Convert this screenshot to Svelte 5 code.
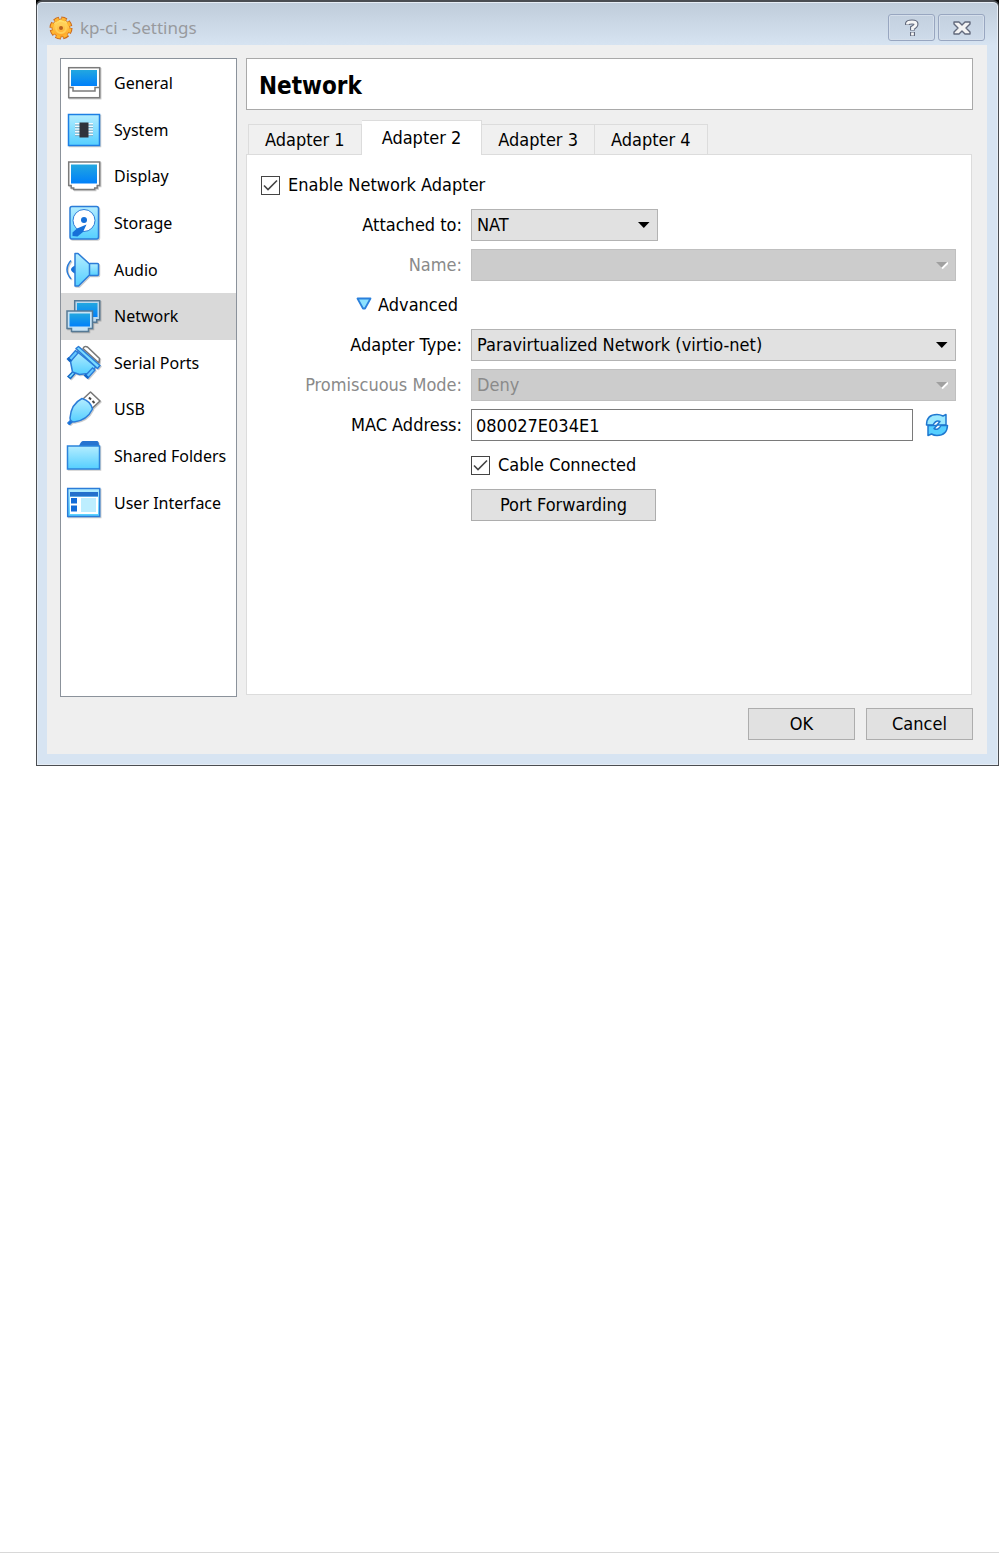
<script>
  const sections = [
    'General', 'System', 'Display', 'Storage', 'Audio',
    'Network', 'Serial Ports', 'USB', 'Shared Folders', 'User Interface'
  ];
  const tabs = ['Adapter 1', 'Adapter 2', 'Adapter 3', 'Adapter 4'];

  let section = $state('Network');
  let tab = $state('Adapter 2');
  let enabled = $state(true);
  let cable = $state(true);
  let mac = $state('080027E034E1');
</script>

{#snippet arrow(disabled)}
  <svg class="arrow" width="12" height="8" viewBox="0 0 12 8" aria-hidden="true">
    {#if disabled}
      <path d="M6 7.500 12 1.500" stroke="#fff" stroke-width="2" />
      <path d="M0 1h11L5.500 6.500z" fill="#a0a0a0" />
    {:else}
      <path d="M0 1h11.500L5.800 7z" fill="#000" />
    {/if}
  </svg>
{/snippet}

{#snippet tick()}
  <svg class="tick" width="19" height="19" viewBox="0 0 19 19" aria-hidden="true">
    <path d="M3 9.500 7 13.500 16 4.500" fill="none" stroke="#444" stroke-width="1.600" />
  </svg>
{/snippet}

{#snippet icon(name)}
  <svg class="icon" width="36" height="36" viewBox="0 0 36 36" fill="none" aria-hidden="true">
    {#if name === 'General'}
      <rect x="2.700" y="2.700" width="31" height="30" fill="#fff" stroke="#7b7b7b" stroke-width="1.500" />
      <rect x="5" y="5" width="26" height="16" fill="url(#screen)" />
      <path d="M3 22.500h4v3.500h22v-3.500h4" stroke="#7b7b7b" stroke-width="1.500" />
    {:else if name === 'System'}
      <rect x="2.500" y="2.500" width="31" height="31" fill="url(#pale)" stroke="#1d7fe4" stroke-width="1.500" />
      <path d="M9 12h18M9 14.700h18M9 17.400h18M9 20.100h18M9 22.800h18" stroke="#f4fbff" stroke-width="2" />
      <path d="M9 12.800h18M9 15.500h18M9 18.200h18M9 20.900h18M9 23.600h18" stroke="#5b91ad" stroke-width=".7" />
      <rect x="13.500" y="10.500" width="9" height="15" fill="#30343c" />
    {:else if name === 'Display'}
      <path d="M2.700 4h31v23.500h-2.500v2.500h-2.500v1.500h-21v-1.500h-2.500v-2.500h-2.500z" fill="#fff" stroke="#7b7b7b" stroke-width="1.500" />
      <rect x="5" y="6.500" width="26" height="19" fill="url(#screen)" />
    {:else if name === 'Storage'}
      <rect x="4" y="1.500" width="28.500" height="32.500" rx="2" fill="url(#pale)" stroke="#2b7cd8" stroke-width="1.500" />
      <circle cx="18" cy="15.500" r="11" fill="#fff" stroke="#2b7cd8" />
      <path d="M20.500 19.500 11 23.500 6.500 27.500v3.500l5 .5 5.500-4.500z" fill="#1670d8" />
      <circle cx="18" cy="15" r="3" fill="#1670d8" />
    {:else if name === 'Audio'}
      <path d="M5 8.500Q-3 17.500 5 27" stroke="#2b7cd8" stroke-width="1.500" />
      <path d="M9 13.500q-8 4 0 8z" fill="#1670d8" />
      <rect x="23" y="11.500" width="9.500" height="12" rx="1" fill="url(#pale)" stroke="#2b7cd8" stroke-width="1.500" />
      <path d="M9 1.500h3L23.500 12v11L12.500 34H9z" fill="url(#pale)" stroke="#2b7cd8" stroke-width="1.500" stroke-linejoin="round" />
    {:else if name === 'Network'}
      <path d="M8.700 2.700h25v19h-3v2.500h-15l-7-4z" fill="#bcd9ee" stroke="#557995" stroke-width="1.500" />
      <rect x="11" y="5" width="20.500" height="14" fill="url(#screen)" />
      <path d="M1 13h25.500v17.500h-4v3h-17v-3H1z" fill="#c6e2f5" stroke="#557995" stroke-width="1.500" />
      <rect x="3.500" y="15.500" width="20.500" height="13" fill="url(#screen)" />
    {:else if name === 'Serial Ports'}
      <path d="M17 3.500Q18.500.5 21.500 2L33.500 13.500 33 18z" fill="#fff" stroke="#777" stroke-width="1.500" stroke-linejoin="round" />
      <path d="m2 31.500 5-5 2 2-4.500 5z" fill="#7bdcff" stroke="#176bc6" stroke-width="1.500" />
      <path d="M11 6.500 4.500 16.500 6.500 27l7 2.500 8.500-1 8-6.500z" fill="url(#pale)" stroke="#2b7cd8" stroke-width="1.500" stroke-linejoin="round" />
      <path d="m2.500 13.500 7-8 2.500 2.500-7 8zM19.500 30.500l7-7.500 2.500 2-7 8z" fill="#66c9ff" stroke="#2b7cd8" stroke-width="1.300" />
      <path d="m.5 14 2-2 3.500 3.500-2.500 1.500zM17.500 30.500l2-1.500 3.500 3-1.500 2z" fill="#1266c8" />
      <path d="M10 3.500 12.500 1.500 34 20.500 31.500 23.500z" fill="#7bdcff" stroke="#2b7cd8" stroke-width="1.500" stroke-linejoin="round" />
    {:else if name === 'USB'}
      <path d="m17 8 7.500-7L34 10l-7.500 7z" fill="#fff" stroke="#777" stroke-width="1.500" stroke-linejoin="round" />
      <path d="m23 6.500 2 2m1.500 1.500 2 2" stroke="#444" stroke-width="2" />
      <path d="m1.500 32 4-4 2 2-4 4z" fill="#1670d8" stroke="#1670d8" />
      <path d="M16 7.500Q5 13 4 27q0 3.500 4 4 13-1.500 18.500-13-2-8-10.500-10.500z" fill="url(#pale)" stroke="#2b7cd8" stroke-width="1.500" stroke-linejoin="round" />
    {:else if name === 'Shared Folders'}
      <path d="M13 8q2-5 4-5h14q2 0 2 5z" fill="#2774d0" />
      <rect x="1.500" y="8" width="32" height="23" fill="url(#pale)" stroke="#2b84dc" stroke-width="1.500" />
    {:else}
      <rect x="1.700" y="3.500" width="32" height="28" fill="url(#pale)" stroke="#2b7cd8" stroke-width="1.500" />
      <path d="M4 7h28v4.500H4z" fill="#2470cc" />
      <path d="M4 12h28v17H4z" fill="#fff" />
      <path d="M5 13h6v5.500H5zm0 7.500h6v6H5z" fill="#126bd8" />
      <path d="M15 13h15v14H15z" fill="#bdeeff" />
    {/if}
  </svg>
{/snippet}

<svg class="defs" width="0" height="0" aria-hidden="true">
  <defs>
    <linearGradient id="screen" x2="0" y2="1"><stop stop-color="#22a7e0" /><stop offset="1" stop-color="#0080fa" /></linearGradient>
    <linearGradient id="pale" x2="0" y2="1"><stop stop-color="#b4edff" /><stop offset="1" stop-color="#55cfff" /></linearGradient>
    <linearGradient id="gear" x2="0" y2="1"><stop stop-color="#ffe873" /><stop offset="1" stop-color="#ff9d1e" /></linearGradient>
  </defs>
</svg>

<div class="page">
  <div class="backdrop">
    <div class="dialog" role="dialog" aria-labelledby="title">
      <header class="titlebar">
        <svg width="24" height="24" viewBox="0 0 24 24" aria-hidden="true">
          <circle cx="12" cy="12" r="9" fill="none" stroke="#c9661c" stroke-width="5" stroke-dasharray="5 2.069" />
          <circle cx="12" cy="12" r="9" fill="url(#gear)" stroke="#d97a20" />
          <circle cx="12" cy="12" r="9" fill="none" stroke="#ffb52f" stroke-width="3" stroke-dasharray="4 3.069" stroke-dashoffset="-.5" />
          <circle cx="12" cy="12" r="5" fill="none" stroke="#ffcf58" stroke-width="2" />
          <circle cx="12" cy="12" r="2" fill="#b9601c" />
        </svg>
        <span id="title" class="title">kp-ci - Settings</span>
        <button class="caption" aria-label="Help">
          <svg width="18" height="18" viewBox="0 0 18 18" fill="none">
            <path d="M4.500 6V4.500Q5 3 9 3t4 2-3.500 4v2.500M9.500 13v4" stroke="#62697c" stroke-width="5" />
            <path d="M4.500 5.500V4.500Q5 3 9 3t4 2-3.500 4v2M9.500 13.500v3" stroke="#f6f6f6" stroke-width="2.800" />
          </svg>
        </button>
        <button class="caption" aria-label="Close">
          <svg width="18" height="18" viewBox="0 0 18 18" fill="none">
            <path d="M1 3h5l3 3 3-3h5v2l-4 4 4 4v2h-5l-3-3-3 3H1v-2l4-4-4-4z" fill="#f3f3f3" stroke="#62697c" stroke-width="1.400" stroke-linejoin="round" />
          </svg>
        </button>
      </header>

      <div class="client">
        <nav class="sidebar" aria-label="Settings sections">
          {#each sections as name}
            <button class="section" class:current={name === section} onclick={() => (section = name)}>
              {@render icon(name)}
              <span>{name}</span>
            </button>
          {/each}
        </nav>

        <main class="content">
          <h1>{section}</h1>
          <div class="tabs" role="tablist">
            {#each tabs as name}
              <button class="tab" role="tab" aria-selected={name === tab} class:active={name === tab} onclick={() => (tab = name)}>{name}</button>
            {/each}
          </div>
          <div class="pane" role="tabpanel">
            <label class="check"><span class="box"><input type="checkbox" bind:checked={enabled} />{#if enabled}{@render tick()}{/if}</span>Enable Network Adapter</label>
            <div class="form">
              <label for="attached">Attached to:</label>
              <div class="combo short"><select id="attached"><option>NAT</option></select>{@render arrow(false)}</div>

              <label class="off" for="name">Name:</label>
              <div class="combo"><select id="name" disabled><option></option></select>{@render arrow(true)}</div>

              <button class="advanced" aria-expanded="true">
                <svg width="16" height="16" viewBox="0 0 16 16" aria-hidden="true"><path d="M1.500 1.500h13L9 11.500H7z" fill="#8ce2ff" stroke="#2b80dc" stroke-width="1.800" stroke-linejoin="round" /></svg>
                Advanced
              </button>

              <label for="type">Adapter Type:</label>
              <div class="combo"><select id="type"><option>Paravirtualized Network (virtio-net)</option></select>{@render arrow(false)}</div>

              <label class="off" for="promiscuous">Promiscuous Mode:</label>
              <div class="combo"><select id="promiscuous" disabled><option>Deny</option></select>{@render arrow(true)}</div>

              <label for="mac">MAC Address:</label>
              <div class="mac">
                <input id="mac" type="text" bind:value={mac} />
                <button class="refresh" aria-label="Generate new address">
                  <svg width="24" height="24" viewBox="0 0 24 24" fill="none" stroke-linejoin="round">
                    <path d="M1.500 12Q1.500 1.500 12 1.500q3 0 6 1.500l3-1.500v10.500h-9l3-3.500q-4-2-7 3.500z" fill="#9be9ff" stroke="#1f78d0" stroke-width="1.500" />
                    <path d="M22.500 12.500Q22 22.500 12 22.500q-3 0-5.500-1.500l-3.500 1.500V12.500h9L9 15.500q4 2.500 7-3z" fill="#55cfff" stroke="#1f78d0" stroke-width="1.500" />
                  </svg>
                </button>
              </div>

              <label class="check second"><span class="box"><input type="checkbox" bind:checked={cable} />{#if cable}{@render tick()}{/if}</span>Cable Connected</label>
              <button class="push forwarding">Port Forwarding</button>
            </div>
          </div>
        </main>

        <footer class="actions">
          <button class="push">OK</button>
          <button class="push">Cancel</button>
        </footer>
      </div>
    </div>
  </div>
</div>

<style>
  :global(body) { background: #fff; }
  * { box-sizing: border-box; }
  button, input, select { font: inherit; color: inherit; margin: 0; border-radius: 0; }
  svg { display: block; flex: none; }
  .defs { position: absolute; }

  .page {
    min-height: 100vh;
    padding-left: 36px;
    border-bottom: 1px solid #d8d8d8;
    color: #000;
    font: 18px/24px "DejaVu Sans Condensed", "Noto Sans", sans-serif;
  }
  .backdrop { background: #000; }
  .dialog {
    padding: 0 11px 11px 10px;
    border: 1px solid #4a4d52;
    border-top-width: 2px;
    border-radius: 6px 6px 0 0;
    background: linear-gradient(#bfccda, #d7e4f2 44px);
    box-shadow: inset 0 0 0 1px #e6edf5;
  }
  .titlebar { display: flex; align-items: center; gap: 3px; height: 43px; padding: 8px 2px 0; }
  .title { flex: 1; padding: 0 0 0 4px; color: #989a9e; font: 17px/24px "Noto Sans", sans-serif; }
  .caption {
    display: grid;
    place-items: center;
    width: 47px;
    height: 27px;
    padding: 0;
    border: 1px solid #98a6c0;
    border-radius: 3px;
    background: linear-gradient(#c3d0df, #cedbea);
    box-shadow: inset 0 0 0 1px #d5dfeb;
  }

  .client {
    display: grid;
    grid-template-columns: 177px minmax(0, 1fr);
    column-gap: 9px;
    row-gap: 11px;
    padding: 13px 14px 14px 13px;
    background: #efefef;
  }
  .sidebar {
    display: grid;
    grid-template-rows: repeat(10, 1fr);
    padding: 1px 0 170px;
    border: 1px solid #8b929b;
    background: #fff;
    font: 16px/24px "Noto Sans", sans-serif;
  }
  .section {
    display: flex;
    align-items: center;
    gap: 12px;
    min-height: 0;
    padding: 0 0 0 5px;
    border: 0;
    background: none;
    text-align: left;
    white-space: nowrap;
  }
  .section.current { background: #d9d9d9; }
  .icon { filter: drop-shadow(1px 1px 0 #0003); }

  .content { display: flex; flex-direction: column; min-width: 0; }
  h1 {
    margin: 0 0 10px;
    padding: 12px 12px 8px;
    border: 1px solid #a9a9a9;
    background: #fff;
    font-size: 24px;
    line-height: 30px;
  }
  .tabs { display: flex; align-items: flex-end; height: 34px; padding-left: 2px; }
  .tab {
    height: 31px;
    padding: 0 16px;
    border: 1px solid #dcdcdc;
    border-left-width: 0;
    background: #f0f0f0;
    margin-bottom: -1px;
  }
  .tab:first-child { border-left-width: 1px; }
  .tab.active { height: 35px; padding: 0 20px; border-bottom: 0; background: #fff; z-index: 1; }
  .pane { flex: 1; min-height: 541px; margin: 0 1px 2px 0; padding: 14px; border: 1px solid #dcdcdc; background: #fff; }

  .check { display: flex; align-items: center; gap: 8px; height: 32px; }
  .pane > .check { margin-bottom: 8px; }
  .box { display: grid; width: 19px; height: 19px; }
  .box input { grid-area: 1 / 1; appearance: none; width: 19px; height: 19px; border: 1px solid #444; background: #fff; }
  .tick { grid-area: 1 / 1; pointer-events: none; }

  .form {
    display: grid;
    grid-template-columns: 201px minmax(0, 1fr);
    grid-auto-rows: 32px;
    align-items: center;
    gap: 8px 9px;
    padding-right: 1px;
  }
  .form > label:not(.check) { text-align: right; white-space: nowrap; }
  .form .off { color: #8a8a8a; }
  .combo { display: grid; align-items: center; height: 32px; }
  .combo select {
    grid-area: 1 / 1;
    appearance: none;
    width: 100%;
    height: 32px;
    padding: 0 24px 0 5px;
    border: 1px solid #b3b3b3;
    background: #e1e1e1;
  }
  .combo select:disabled { border-color: #bfbfbf; background: #ccc; color: #8a8a8a; opacity: 1; }
  .short { width: 187px; }
  .arrow { grid-area: 1 / 1; justify-self: end; margin-right: 8px; pointer-events: none; }
  .advanced { grid-column: 1; display: flex; align-items: center; justify-self: end; gap: 6px; padding: 0 4px 0 0; border: 0; background: none; }
  .form label[for="type"] { grid-column: 1; }
  .mac { display: flex; align-items: center; gap: 12px; padding-right: 7px; }
  .mac input { flex: 1; min-width: 0; height: 32px; padding: 0 4px; border: 1px solid #7a7a7a; background: #fff; }
  .refresh { padding: 0; border: 0; background: none; }
  .second, .forwarding { grid-column: 2; justify-self: start; }
  .push { height: 32px; padding: 0; border: 1px solid #adadad; background: #e1e1e1; }
  .forwarding { width: 185px; }
  .actions { grid-column: 1 / -1; display: flex; justify-content: flex-end; gap: 11px; }
  .actions .push { width: 107px; }
</style>
